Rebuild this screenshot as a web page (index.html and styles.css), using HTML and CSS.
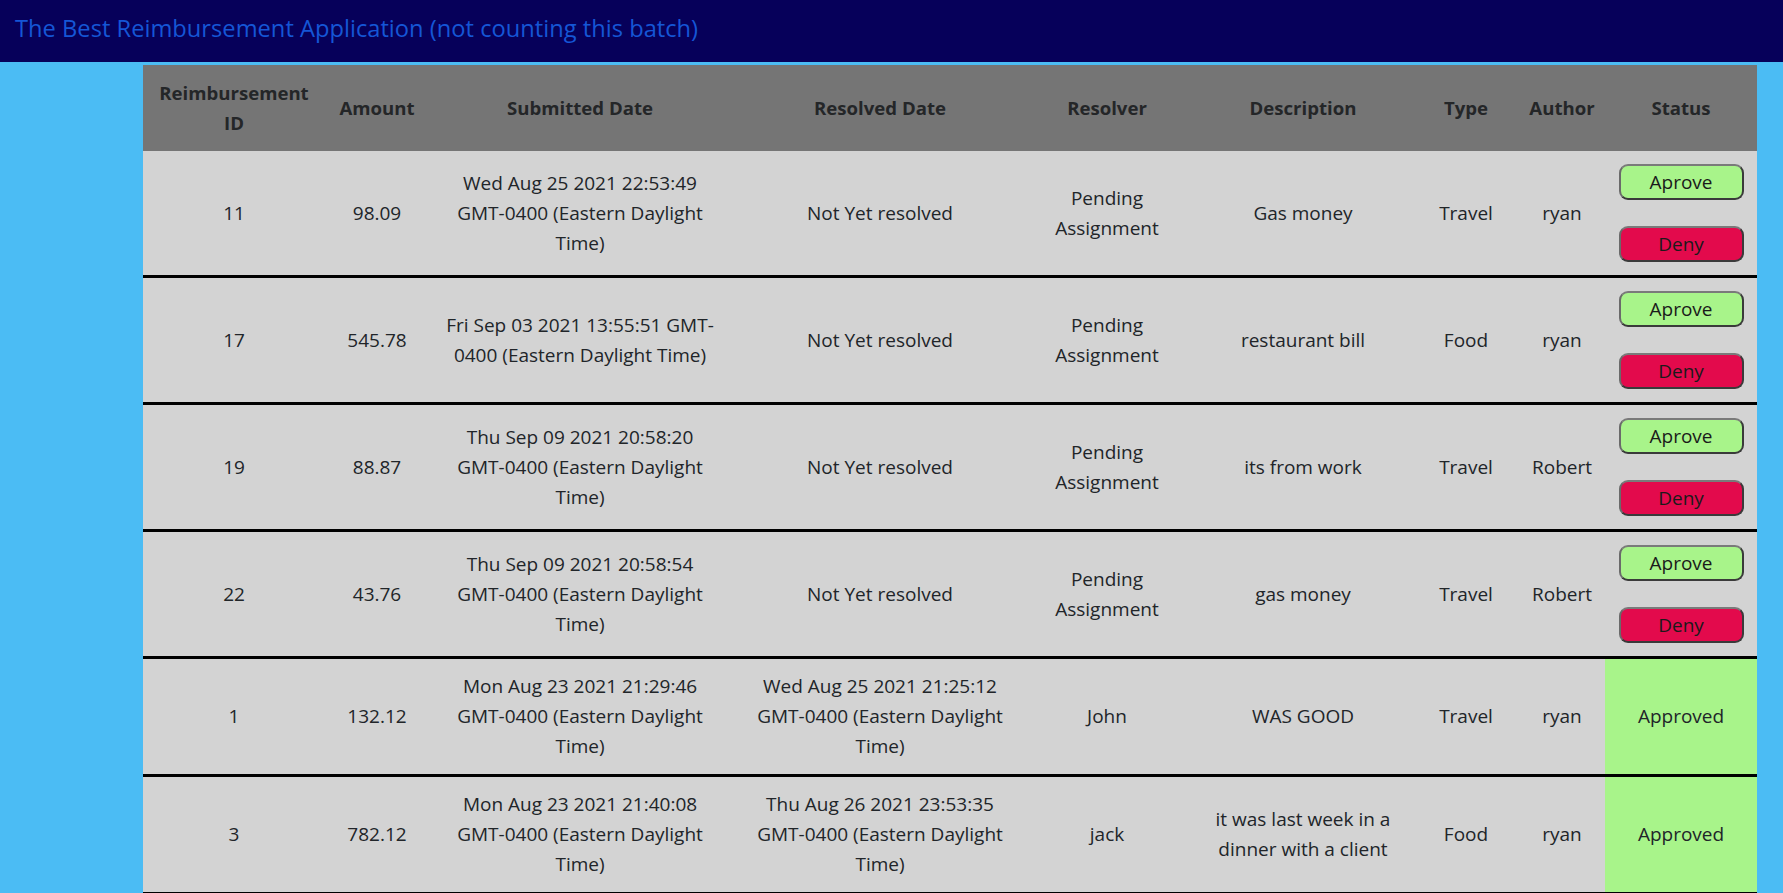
FILE: index.html
```html
<!DOCTYPE html>
<html lang="en">
<head>
<meta charset="utf-8">
<title>Reimbursements</title>
<link rel="stylesheet" href="styles.css">
</head>
<body>
<header class="navbar">
  <span class="brand">The Best Reimbursement Application (not counting this batch)</span>
</header>
<main class="content">
  <table class="reimb-table">
    <colgroup>
      <col class="c-id"><col class="c-amount"><col class="c-sub"><col class="c-res"><col class="c-resolver"><col class="c-desc"><col class="c-type"><col class="c-author"><col class="c-status">
    </colgroup>
    <thead>
      <tr>
        <th>Reimbursement ID</th>
        <th>Amount</th>
        <th>Submitted Date</th>
        <th>Resolved Date</th>
        <th>Resolver</th>
        <th>Description</th>
        <th>Type</th>
        <th class="author">Author</th>
        <th>Status</th>
      </tr>
    </thead>
    <tbody>
      <tr>
        <td>11</td><td>98.09</td>
        <td>Wed Aug 25 2021 22:53:49 GMT-0400 (Eastern Daylight Time)</td>
        <td>Not Yet resolved</td><td>Pending Assignment</td><td>Gas money</td><td>Travel</td><td class="author">ryan</td>
        <td class="actions"><button class="btn btn-approve">Aprove</button><button class="btn btn-deny">Deny</button></td>
      </tr>
      <tr>
        <td>17</td><td>545.78</td>
        <td>Fri Sep 03 2021 13:55:51 GMT-0400 (Eastern Daylight Time)</td>
        <td>Not Yet resolved</td><td>Pending Assignment</td><td>restaurant bill</td><td>Food</td><td class="author">ryan</td>
        <td class="actions"><button class="btn btn-approve">Aprove</button><button class="btn btn-deny">Deny</button></td>
      </tr>
      <tr>
        <td>19</td><td>88.87</td>
        <td>Thu Sep 09 2021 20:58:20 GMT-0400 (Eastern Daylight Time)</td>
        <td>Not Yet resolved</td><td>Pending Assignment</td><td>its from work</td><td>Travel</td><td class="author">Robert</td>
        <td class="actions"><button class="btn btn-approve">Aprove</button><button class="btn btn-deny">Deny</button></td>
      </tr>
      <tr>
        <td>22</td><td>43.76</td>
        <td>Thu Sep 09 2021 20:58:54 GMT-0400 (Eastern Daylight Time)</td>
        <td>Not Yet resolved</td><td>Pending Assignment</td><td>gas money</td><td>Travel</td><td class="author">Robert</td>
        <td class="actions"><button class="btn btn-approve">Aprove</button><button class="btn btn-deny">Deny</button></td>
      </tr>
      <tr>
        <td>1</td><td>132.12</td>
        <td>Mon Aug 23 2021 21:29:46 GMT-0400 (Eastern Daylight Time)</td>
        <td>Wed Aug 25 2021 21:25:12 GMT-0400 (Eastern Daylight Time)</td>
        <td>John</td><td>WAS GOOD</td><td>Travel</td><td class="author">ryan</td>
        <td class="approved">Approved</td>
      </tr>
      <tr>
        <td>3</td><td>782.12</td>
        <td>Mon Aug 23 2021 21:40:08 GMT-0400 (Eastern Daylight Time)</td>
        <td>Thu Aug 26 2021 23:53:35 GMT-0400 (Eastern Daylight Time)</td>
        <td>jack</td><td>it was last week in a dinner with a client</td><td>Food</td><td class="author">ryan</td>
        <td class="approved">Approved</td>
      </tr>
    </tbody>
  </table>
</main>
</body>
</html>
```
FILE: styles.css
```css
html, body {
  margin: 0;
  padding: 0;
}
body {
  background: #4bbcf4;
  font-family: "Open Sans", "Liberation Sans", sans-serif;
  font-size: 19px;
  line-height: 30px;
  color: #212529;
}
.navbar {
  background: #06005a;
  height: 62px;
  display: flex;
  align-items: center;
  padding: 0 15px;
  box-sizing: border-box;
}
.brand {
  color: #1556d6;
  font-size: 23.7px;
  line-height: 30px;
  padding-bottom: 6px;
}
.content {
  padding: 3px 26px 0 143px;
}
.reimb-table {
  width: 1614px;
  table-layout: fixed;
  border-collapse: collapse;
  background: #d3d3d3;
}
.c-id { width: 182px; }
.c-amount { width: 104px; }
.c-sub { width: 302px; }
.c-res { width: 298px; }
.c-resolver { width: 156px; }
.c-desc { width: 236px; }
.c-type { width: 90px; }
.c-author { width: 94px; }
.c-status { width: 152px; }
.reimb-table th,
.reimb-table td {
  text-align: center;
  vertical-align: middle;
  padding: 12px 14px 13px;
}
.reimb-table .author {
  padding-left: 18px;
  padding-right: 10px;
}
.reimb-table thead th {
  background: #757575;
  font-weight: 700;
  font-size: 18.6px;
  color: #242628;
  padding: 13px 12px 13px;
}
.reimb-table tbody tr {
  border-bottom: 3px solid #000;
}
.reimb-table td.approved {
  background: #a8f48a;
}
.reimb-table td.actions {
  padding: 13px 8px 13px;
}
.btn {
  display: block;
  margin: 0 auto;
  width: 125px;
  height: 36px;
  border-radius: 9px;
  border: 2px solid #3a3a3a;
  border-top-color: #7a7a7a;
  border-left-color: #6a6a6a;
  font-family: inherit;
  font-size: 19px;
  line-height: 28px;
  color: #1a1a1a;
  padding: 0;
}
.btn + .btn {
  margin-top: 26px;
}
.btn-approve {
  background: #a8f48a;
}
.btn-deny {
  background: #e30a4c;
}
```
